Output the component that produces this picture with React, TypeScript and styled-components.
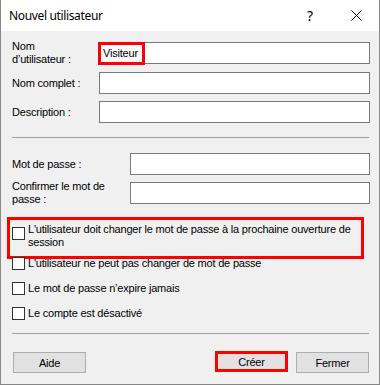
import React from 'react'
import styled, { createGlobalStyle } from 'styled-components';

const GlobalStyle = createGlobalStyle`
    html, body {
        margin: 0;
        padding: 0;
        background: #ffffff;
    }
    * {
        box-sizing: border-box;
    }
`;

const Window = styled.div`
    width: 380px;
    display: flex;
    flex-direction: column;
    border: 1px solid #8a8a8a;
    border-top: none;
    background: #f0f0f0;
    font-family: "Liberation Sans", Arial, sans-serif;
    font-size: 11px;
    letter-spacing: -0.2px;
    color: #000;
`;

const TitleBar = styled.div`
    height: 31px;
    background: #fff;
    display: flex;
    align-items: center;
    padding-left: 8px;
    letter-spacing: 0;
`;

const Title = styled.div`
    flex: 1;
    font-family: "Noto Sans", "Segoe UI", sans-serif;
    font-size: 12px;
    letter-spacing: -0.35px;
    color: #000;
    padding-bottom: 1px;
`;

const TitleButton = styled.div`
    width: ${props => props.$w}px;
    height: 31px;
    display: flex;
    align-items: center;
    justify-content: center;
    font-family: "Noto Sans", sans-serif;
    font-size: 14px;
`;

const Body = styled.div`
    padding: 9px 9px 11px 11px;
    display: flex;
    flex-direction: column;
`;

const FieldRow = styled.div`
    display: flex;
    align-items: center;
    margin-top: ${props => props.$mt || 0}px;
`;

const Label = styled.div`
    width: ${props => props.$w}px;
    flex: none;
    line-height: 13px;
    padding-right: 4px;
`;

const FieldBox = styled.div`
    position: relative;
    flex: 1;
`;

const Input = styled.input`
    display: block;
    width: 100%;
    height: 22px;
    border: 1px solid #7a7a7a;
    background: #fff;
    font-family: "Liberation Sans", Arial, sans-serif;
    font-size: 11px;
    letter-spacing: -0.2px;
    padding: 0 3px 1px 3px;
    margin: 0;
    outline: none;
    color: #000;
`;

const Mark = styled.div`
    position: absolute;
    left: -1px;
    top: 0;
    width: 47px;
    height: 23px;
    border: 3px solid #ff0000;
    pointer-events: none;
`;

const Separator = styled.div`
    height: 1px;
    background: #a0a0a0;
    margin-top: ${props => props.$mt}px;
    margin-right: 1px;
`;

const CheckRow = styled.label`
    position: relative;
    display: flex;
    align-items: ${props => props.$multi ? 'flex-start' : 'center'};
    gap: 3px;
    margin-top: ${props => props.$mt || 0}px;
    line-height: 13px;

    ${props => props.$highlight && `
        &::after {
            content: '';
            position: absolute;
            left: -5px;
            top: -6px;
            width: 351px;
            height: 36px;
            border: 3px solid #ff0000;
            pointer-events: none;
        }
    `}
`;

const Box = styled.span`
    flex: none;
    width: 13px;
    height: 13px;
    border: 1px solid #333;
    background: #fff;
    margin-top: ${props => props.$multi ? 4 : 0}px;
`;

const ButtonBar = styled.div`
    display: flex;
    justify-content: space-between;
    margin-top: 18px;
    padding-left: 1px;
    padding-right: 1px;
`;

const Group = styled.div`
    display: flex;
    gap: 8px;
`;

const Button = styled.button`
    width: 73px;
    height: 21px;
    background: #e1e1e1;
    border: ${props => props.$highlight ? '3px solid #ff0000' : '1px solid #adadad'};
    font-family: "Liberation Sans", Arial, sans-serif;
    font-size: 11px;
    letter-spacing: -0.2px;
    color: #000;
    padding: 0;
    margin-top: ${props => props.$highlight ? -1 : 0}px;
`;

function CloseIcon() {
    return (
        <svg width="11" height="11" viewBox="0 0 11 11">
            <path d="M0.5 0.5 L10.5 10.5 M10.5 0.5 L0.5 10.5" stroke="#000" strokeWidth="1" fill="none" />
        </svg>
    );
}

export default function App() {
    return (
        <>
            <GlobalStyle />
            <Window>
                <TitleBar>
                    <Title>Nouvel utilisateur</Title>
                    <TitleButton $w={46}>?</TitleButton>
                    <TitleButton $w={46}><CloseIcon /></TitleButton>
                </TitleBar>
                <Body>
                    <FieldRow>
                        <Label $w={87}>Nom<br />d’utilisateur :</Label>
                        <FieldBox>
                            <Input defaultValue="Visiteur" />
                            <Mark />
                        </FieldBox>
                    </FieldRow>
                    <FieldRow $mt={6}>
                        <Label $w={87}>Nom complet :</Label>
                        <FieldBox><Input /></FieldBox>
                    </FieldRow>
                    <FieldRow $mt={7}>
                        <Label $w={87}>Description :</Label>
                        <FieldBox><Input /></FieldBox>
                    </FieldRow>

                    <Separator $mt={14} />

                    <FieldRow $mt={15}>
                        <Label $w={118}>Mot de passe :</Label>
                        <FieldBox><Input type="text" /></FieldBox>
                    </FieldRow>
                    <FieldRow $mt={5}>
                        <Label $w={118}>Confirmer le mot de passe :</Label>
                        <FieldBox><Input type="text" /></FieldBox>
                    </FieldRow>

                    <CheckRow $multi $highlight $mt={17}>
                        <Box $multi />
                        <span>L'utilisateur doit changer le mot de passe à la prochaine ouverture de session</span>
                    </CheckRow>
                    <CheckRow $mt={8}>
                        <Box />
                        <span>L'utilisateur ne peut pas changer de mot de passe</span>
                    </CheckRow>
                    <CheckRow $mt={12}>
                        <Box />
                        <span>Le mot de passe n’expire jamais</span>
                    </CheckRow>
                    <CheckRow $mt={12}>
                        <Box />
                        <span>Le compte est désactivé</span>
                    </CheckRow>

                    <Separator $mt={13} />

                    <ButtonBar>
                        <Button>Aide</Button>
                        <Group>
                            <Button $highlight>Créer</Button>
                            <Button>Fermer</Button>
                        </Group>
                    </ButtonBar>
                </Body>
            </Window>
        </>
    )
}
